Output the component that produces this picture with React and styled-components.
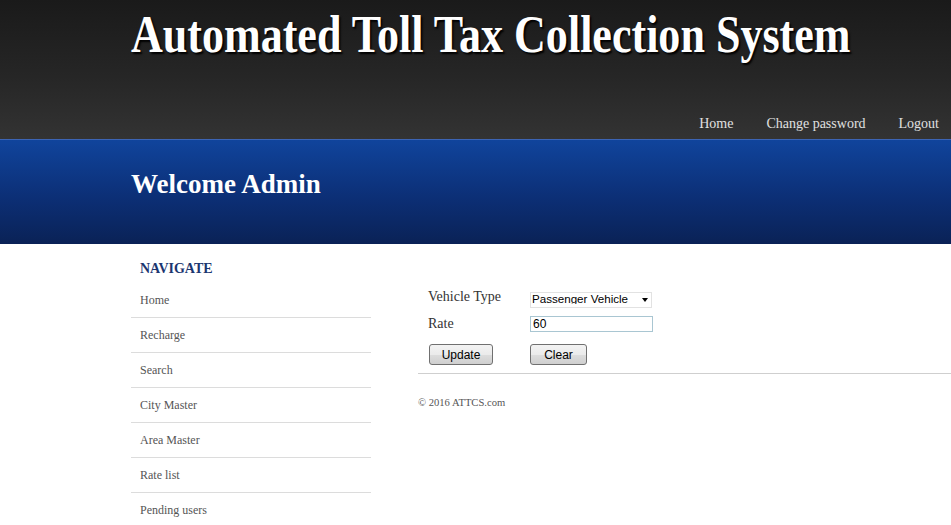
import styled, { createGlobalStyle } from 'styled-components';

const GlobalStyle = createGlobalStyle`
  html, body {
    margin: 0;
    padding: 0;
    background: #fff;
    font-family: "Liberation Serif", "Times New Roman", serif;
  }
`;

const Header = styled.header`
  height: 139px;
  background: linear-gradient(to bottom, #1a1a1a 0%, #262626 55%, #333 100%);
  border-bottom: 1px solid #3c64b4;
  display: flex;
  flex-direction: column;
  justify-content: space-between;
  padding-left: 131px;
  box-sizing: content-box;
`;

const Title = styled.h1`
  margin: 7px 0 0;
  font-size: 52px;
  line-height: 56px;
  font-weight: bold;
  color: #fff;
  text-shadow: 2px 2px 2px #000;
  white-space: nowrap;
  transform: scaleX(0.847);
  transform-origin: left center;
`;

const TopNav = styled.nav`
  display: flex;
  justify-content: flex-end;
  gap: 33px;
  padding: 0 12px 7px 0;
`;

const TopLink = styled.a`
  color: #e0e0e0;
  font-size: 14px;
  text-decoration: none;
`;

const Banner = styled.div`
  height: 104px;
  background: linear-gradient(to bottom, #10449c 0%, #0c2f76 55%, #0a2256 100%);
  display: flex;
  align-items: center;
  padding-left: 131px;
`;

const Welcome = styled.h2`
  margin: 0 0 16px;
  font-size: 27px;
  font-weight: bold;
  color: #fff;
`;

const Body = styled.div`
  display: flex;
  padding-left: 131px;
`;

const Sidebar = styled.aside`
  width: 240px;
  flex-shrink: 0;
  padding-top: 17px;
`;

const SideTitle = styled.h3`
  margin: 0;
  padding-left: 9px;
  height: 16px;
  line-height: 16px;
  font-size: 14px;
  font-weight: bold;
  color: #1b3670;
`;

const SideList = styled.ul`
  list-style: none;
  margin: 6px 0 0;
  padding: 0;
`;

const SideItem = styled.li`
  height: 34px;
  line-height: 35px;
  padding-left: 9px;
  font-size: 12px;
  color: #555;
  border-bottom: ${p => (p.$last ? 'none' : '1px solid #dcdcdc')};
`;

const Main = styled.main`
  flex: 1;
  margin-left: 47px;
  padding-top: 45px;
`;

const Form = styled.div`
  display: grid;
  grid-template-columns: 102px auto;
  row-gap: 11px;
  padding-left: 10px;
  align-items: center;
  justify-items: start;
`;

const Label = styled.span`
  font-size: 14px;
  color: #333;
  line-height: 16px;
`;

const SelectWrap = styled.div`
  position: relative;
  width: 122px;
  height: 16px;
`;

const Select = styled.select`
  appearance: none;
  box-sizing: border-box;
  width: 122px;
  height: 16px;
  margin: 0;
  padding: 0 0 3px 1px;
  border: 1px solid #e2e2e2;
  border-radius: 0;
  background: #fff;
  font-family: "Liberation Sans", Arial, sans-serif;
  font-size: 11.6px;
  line-height: 12px;
  color: #000;
  outline: none;
`;

const Arrow = styled.span`
  position: absolute;
  right: 4px;
  top: 9px;
  border-left: 3.5px solid transparent;
  border-right: 3.5px solid transparent;
  border-top: 4px solid #000;
  pointer-events: none;
`;

const TextInput = styled.input`
  width: 123px;
  height: 16px;
  box-sizing: border-box;
  margin: 0;
  padding: 0 2px;
  border: 1px solid #a9c6d2;
  font-family: "Liberation Sans", Arial, sans-serif;
  font-size: 12px;
  color: #000;
  outline: none;
`;

const Button = styled.button`
  width: ${p => p.$w}px;
  height: 21px;
  margin: 1px 0 0 ${p => p.$ml || 0}px;
  padding: 0;
  border: 1px solid #707070;
  border-radius: 3px;
  background: linear-gradient(to bottom, #f3f3f3 0%, #ebebeb 50%, #dddddd 51%, #cfcfcf 100%);
  font-family: "Liberation Sans", Arial, sans-serif;
  font-size: 12px;
  color: #000;
`;

const Rule = styled.hr`
  margin: 8px 0 0;
  border: 0;
  border-top: 1px solid #cfcfcf;
`;

const Footer = styled.p`
  margin: 23px 0 0;
  font-size: 10.6px;
  color: #555;
`;

const menu = ['Home', 'Recharge', 'Search', 'City Master', 'Area Master', 'Rate list', 'Pending users'];

export default function App() {
  return (
    <>
      <GlobalStyle />
      <Header>
        <Title>Automated Toll Tax Collection System</Title>
        <TopNav>
          <TopLink href="#">Home</TopLink>
          <TopLink href="#">Change password</TopLink>
          <TopLink href="#">Logout</TopLink>
        </TopNav>
      </Header>
      <Banner>
        <Welcome>Welcome Admin</Welcome>
      </Banner>
      <Body>
        <Sidebar>
          <SideTitle>NAVIGATE</SideTitle>
          <SideList>
            {menu.map((m, i) => (
              <SideItem key={m} $last={i === menu.length - 1}>{m}</SideItem>
            ))}
          </SideList>
        </Sidebar>
        <Main>
          <Form>
            <Label>Vehicle Type</Label>
            <SelectWrap>
              <Select defaultValue="Passenger Vehicle">
                <option>Passenger Vehicle</option>
                <option>Goods Vehicle</option>
              </Select>
              <Arrow />
            </SelectWrap>
            <Label>Rate</Label>
            <TextInput defaultValue="60" />
            <Button $w={64} $ml={1}>Update</Button>
            <Button $w={57}>Clear</Button>
          </Form>
          <Rule />
          <Footer>© 2016 ATTCS.com</Footer>
        </Main>
      </Body>
    </>
  );
}
